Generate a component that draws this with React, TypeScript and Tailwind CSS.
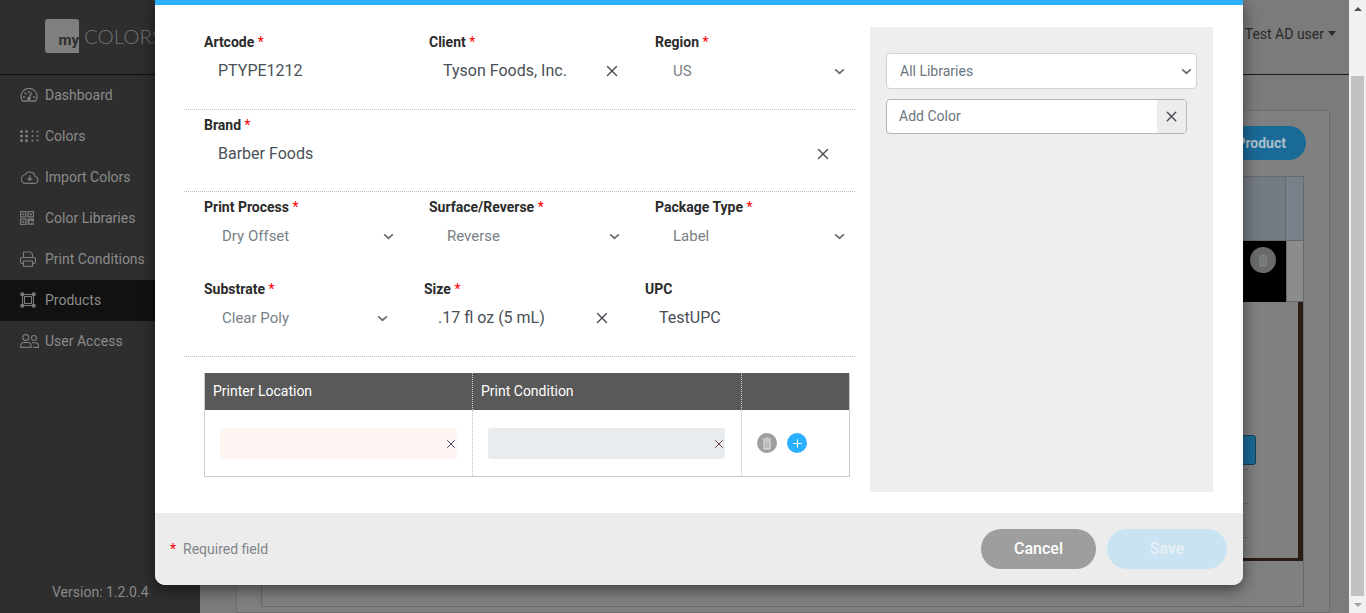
import React from "react";
import { X, Plus } from "lucide-react";

const Dots = () => (
  <svg viewBox="0 0 19 12" width="19" height="12" fill="currentColor">
    {[1.5, 6.5, 12.5, 17.5].map((x, i) =>
      [1.5, 6, 10.5].map((y) => <circle key={`${x}-${y}`} cx={x} cy={y} r={i < 2 ? 1.5 : 1.1} />)
    )}
  </svg>
);

const DashIcon = () => (
  <svg viewBox="0 0 18 14" width="18" height="14" fill="none" stroke="currentColor" strokeWidth="1.3">
    <path d="M2.5 13 H15.5 A8 8 0 1 0 2.5 13 Z" />
    <path d="M9 10.5 L11.5 4.5" strokeWidth="1.6" />
    <circle cx="9" cy="10.5" r="1.2" fill="currentColor" />
    <g fill="currentColor" stroke="none">
      <circle cx="4" cy="9" r="1.1" />
      <circle cx="5.5" cy="5.5" r="1.1" />
      <circle cx="9" cy="4" r="1.1" />
      <circle cx="14" cy="9" r="1.1" />
    </g>
  </svg>
);

const CloudIcon = () => (
  <svg viewBox="0 0 19 14" width="19" height="14" fill="none" stroke="currentColor" strokeWidth="1.1">
    <path d="M5 13.4 H14.5 A3.5 3.5 0 0 0 15.2 6.5 A5.6 5.6 0 0 0 4.9 4.8 A4.4 4.4 0 0 0 5 13.4 Z" />
    <path d="M9.8 5.2 V10.2 M7.6 8.2 L9.8 10.4 L12 8.2" strokeWidth="1.3" />
  </svg>
);

const QrIcon = () => (
  <svg viewBox="0 0 14 14" width="14" height="14" fill="none" stroke="currentColor" strokeWidth="1.2">
    <rect x="0.6" y="0.6" width="5.3" height="5.3" />
    <rect x="8.1" y="0.6" width="5.3" height="5.3" />
    <rect x="0.6" y="8.1" width="5.3" height="5.3" />
    <g fill="currentColor" stroke="none">
      <rect x="2.3" y="2.3" width="2" height="2" />
      <rect x="9.8" y="2.3" width="2" height="2" />
      <rect x="2.3" y="9.8" width="2" height="2" />
      <path d="M7.5 7.5 H14 V10.5 H11.5 V9.5 H9.5 V14 H7.5 Z" />
      <rect x="10.5" y="12" width="1.5" height="2" />
      <rect x="12.5" y="11.5" width="1.5" height="2.5" />
    </g>
  </svg>
);

const PrinterIcon = () => (
  <svg viewBox="0 0 16 16" width="16" height="16" fill="none" stroke="currentColor" strokeWidth="1.1">
    <path d="M3.5 6.5 V1 H10.5 L12.5 3 V6.5" />
    <rect x="0.6" y="6.5" width="14.8" height="6" rx="1.5" />
    <rect x="3.5" y="10" width="9" height="5.4" fill="#2e2e2e" />
  </svg>
);

const Frame = () => (
  <svg viewBox="0 0 16 16" width="16" height="16" fill="none" stroke="currentColor" strokeWidth="1.1">
    <rect x="2.5" y="2.5" width="11" height="11" />
    <rect x="4.5" y="4.5" width="7" height="7" />
    <rect x="1" y="1" width="2.4" height="2.4" fill="currentColor" />
    <rect x="12.6" y="1" width="2.4" height="2.4" fill="currentColor" />
    <rect x="1" y="12.6" width="2.4" height="2.4" fill="currentColor" />
    <rect x="12.6" y="12.6" width="2.4" height="2.4" fill="currentColor" />
  </svg>
);

const UsersIcon = () => (
  <svg viewBox="0 0 19 14" width="19" height="14" fill="none" stroke="currentColor" strokeWidth="1.1">
    <circle cx="5.8" cy="3.6" r="3" />
    <path d="M0.7 13.4 V11.5 A3 3 0 0 1 3.7 8.5 H8 A3 3 0 0 1 11 11.5 V13.4 Z" />
    <circle cx="14" cy="4" r="2.5" />
    <path d="M12 8.7 H15.5 A3 3 0 0 1 18.4 11.6 V13.4 H13" />
  </svg>
);

const TrashIcon = ({ body, stripe }: { body: string; stripe: string }) => (
  <svg viewBox="0 0 10 13" width="10" height="13">
    <rect x="0.5" y="1.5" width="9" height="1.2" fill={body} />
    <rect x="3.5" y="0.3" width="3" height="1.2" fill={body} />
    <rect x="1.2" y="3.2" width="7.6" height="9.3" rx="0.8" fill={body} />
    <path d="M3.2 4.5 V11 M5 4.5 V11 M6.8 4.5 V11" stroke={stripe} strokeWidth="0.8" />
  </svg>
);

const Chevron = () => (
  <svg viewBox="0 0 12 8" width="11" height="7" fill="none" stroke="#6f6f6f" strokeWidth="2">
    <path d="M1 1.5 L6 6 L11 1.5" />
  </svg>
);

const Req = () => <span className="text-[#ff0000] font-normal"> *</span>;

function Field({
  label,
  required = true,
  value,
  kind,
  width,
  select,
}: {
  label: string;
  required?: boolean;
  value: string;
  kind?: "x" | "select";
  width: string;
  select?: boolean;
}) {
  return (
    <div>
      <div className="h-5 text-sm leading-5 font-bold text-[#2b2b2b]">
        {label}
        {required && <Req />}
      </div>
      <div className={`h-[38px] flex items-center justify-between ${width} ${select ? "pl-[18px]" : "pl-[14px]"}`}>
        <span className={select ? "pt-[2px] text-[15px] text-[#787f86]" : "text-base text-[#495057]"}>{value}</span>
        {kind === "x" && <X size={18} strokeWidth={1.9} className="text-[#4a4f55]" />}
        {kind === "select" && <Chevron />}
      </div>
    </div>
  );
}

const navItems: { label: string; icon: React.ReactNode; active?: boolean }[] = [
  { label: "Dashboard", icon: <DashIcon /> },
  { label: "Colors", icon: <Dots /> },
  { label: "Import Colors", icon: <CloudIcon /> },
  { label: "Color Libraries", icon: <QrIcon /> },
  { label: "Print Conditions", icon: <PrinterIcon /> },
  { label: "Products", icon: <Frame />, active: true },
  { label: "User Access", icon: <UsersIcon /> },
];

function Sidebar() {
  return (
    <aside className="w-[200px] shrink-0 bg-[#2e2e2e] flex flex-col h-full">
      <div className="h-[75px] shrink-0 border-b border-[#111] flex items-center pl-[45px] pb-[2px]">
        <div className="w-[34px] h-[34px] bg-[#7f7f7f] rounded-l-[3px] rounded-tr-[3px] flex items-end justify-end pb-[4px]">
          <span className="text-[15px] leading-[17px] font-bold text-[#2e2e2e]">my</span>
        </div>
        <span className="ml-[5px] text-[20.5px] text-[#717171] font-light font-['Lato',sans-serif]">COLORS</span>
      </div>
      <nav className="flex flex-col">
        {navItems.map((n) => (
          <div key={n.label} className={`h-[41px] flex items-center text-sm text-[#8b8b8b] pb-[2px] ${n.active ? "bg-[#111111]" : ""}`}>
            <span className="w-[45px] pl-[20px] flex items-center text-[#7b7b7b]">{n.icon}</span>
            <span>{n.label}</span>
          </div>
        ))}
      </nav>
      <div className="mt-auto h-[31px] pl-[52px] text-sm text-[#8b8b8b]">Version: 1.2.0.4</div>
    </aside>
  );
}

function Backdrop() {
  return (
    <main className="flex-1 bg-[#7b7b7b] flex flex-col min-w-0">
      <header className="h-[75px] shrink-0 border-b border-[#1a1a1a] flex items-center justify-end pr-[13px] pb-[7px]">
        <span className="text-sm text-[#2a2a2a]">Test AD user</span>
        <span className="ml-[4px] border-x-[4px] border-t-[5px] border-x-transparent border-t-[#2a2a2a]" />
      </header>
      <div className="flex-1 pl-[36px] pr-[19px] pt-[35px] min-h-0">
        <div className="h-full border border-[#6b6f72] bg-[#808080] pl-[24px] pr-[25px] pt-[15px]">
          <div className="flex justify-end -mr-[2px]">
            <div className="w-[160px] h-[34px] rounded-full bg-[#1a6a96] text-[#a9bfcc] text-sm font-bold flex items-center justify-end pr-[20px]">
              Add Product
            </div>
          </div>
          <div className="mt-[16px] border border-[#66696c] h-[431px] flex flex-col">
            <div className="h-[64px] shrink-0 flex border-b border-[#66696c] bg-[#737a80]">
              <div className="flex-1" />
              <div className="w-[18px] border-l border-[#66696c] bg-[#78808a]" />
            </div>
            <div className="h-[61px] shrink-0 flex">
              <div className="flex-1 bg-black flex justify-end items-start pt-[6px] pr-[10px]">
                <div className="w-[26px] h-[26px] rounded-full bg-[#6a6a6a] flex items-center justify-center">
                  <TrashIcon body="#7f8488" stripe="#6a6a6a" />
                </div>
              </div>
              <div className="w-[17px] border-l border-b border-[#66696c] bg-[#8c8c8c]" />
            </div>
            <div className="h-[259px] shrink-0 border-r-[5px] border-b-[3px] border-[#2a1c12] flex flex-col items-end pt-[133px]">
              <div className="mr-[42px] w-[40px] h-[30px] shrink-0 rounded-[3px] bg-[#1a6a96] border border-[#153e57]" />
              <div className="mt-[4px] mr-[50px] w-[40px] h-[34px] shrink-0 border-t border-dotted border-[#5f5f5f]" />
              <div className="mr-[50px] w-[40px] h-[34px] shrink-0 border-t border-dotted border-[#5f5f5f]" />
              <div className="mr-[50px] w-[40px] h-[3px] shrink-0 border-t border-dotted border-[#5f5f5f]" />
            </div>
          </div>
        </div>
      </div>
    </main>
  );
}

function Scrollbar() {
  return (
    <div className="w-[17px] shrink-0 bg-[#f1f1f1] flex flex-col items-center">
      <div className="h-[17px] flex items-center justify-center">
        <span className="border-x-[4px] border-b-[4px] border-x-transparent border-b-[#505050]" />
      </div>
      <div className="mt-[59px] h-[520px] w-[13px] bg-[#c1c1c1]" />
      <div className="mt-auto h-[17px] flex items-center justify-center">
        <span className="border-x-[4px] border-t-[4px] border-x-transparent border-t-[#a3a3a3]" />
      </div>
    </div>
  );
}

function Modal() {
  return (
    <div className="absolute left-[155px] top-0 w-[1088px] h-[585px] bg-white border-t-[5px] border-[#2bb0ff] rounded-b-[10px] shadow-[0_5px_15px_rgba(0,0,0,0.5)] flex flex-col overflow-hidden">
      <div className="flex-1 flex min-h-0">
        <div className="w-[700px] pl-[29px] pr-0 pt-[27px]">
          <div className="w-[671px] text-sm">
            <div className="px-5 pb-[19px] border-b border-dotted border-[#bdbdbd] grid grid-cols-[225px_226px_1fr]">
              <Field label="Artcode" value="PTYPE1212" width="w-[190px]" />
              <Field label="Client" value="Tyson Foods, Inc." kind="x" width="w-[192px]" />
              <Field label="Region" value="US" kind="select" select width="w-[190px]" />
            </div>
            <div className="px-5 pt-[5px] pb-[18px] border-b border-dotted border-[#bdbdbd]">
              <Field label="Brand" value="Barber Foods" kind="x" width="w-[628px]" />
            </div>
            <div className="px-5 pt-[5px] grid grid-cols-[225px_226px_1fr]">
              <Field label="Print Process" value="Dry Offset" kind="select" select width="w-[190px]" />
              <Field label="Surface/Reverse" value="Reverse" kind="select" select width="w-[191px]" />
              <Field label="Package Type" value="Label" kind="select" select width="w-[190px]" />
            </div>
            <div className="px-5 pt-[24px] pb-[19px] border-b border-dotted border-[#bdbdbd] grid grid-cols-[220px_221px_1fr]">
              <Field label="Substrate" value="Clear Poly" kind="select" select width="w-[184px]" />
              <Field label="Size" value=".17 fl oz (5 mL)" kind="x" width="w-[187px]" />
              <Field label="UPC" required={false} value="TestUPC" width="w-[190px]" />
            </div>
            <div className="ml-5 mt-[16px] w-[646px] border border-t-0 border-[#cccccc] h-[104px] flex flex-col">
              <div className="h-[37px] shrink-0 bg-[#595959] text-white flex items-center">
                <div className="w-[268px] h-full pl-[8px] pb-[1px] flex items-center border-r border-dotted border-[#cfcfcf]">Printer Location</div>
                <div className="w-[269px] h-full pl-[8px] pb-[1px] flex items-center border-r border-dotted border-[#cfcfcf]">Print Condition</div>
              </div>
              <div className="flex-1 flex">
                <div className="w-[268px] pl-[15px] pt-[18px] border-r border-dotted border-[#bdbdbd]">
                  <div className="w-[237px] h-[31px] bg-[#fff5f3] rounded-[3px] flex items-center justify-end">
                    <X size={14} strokeWidth={1.6} className="-mr-[1px] text-[#33335f]" />
                  </div>
                </div>
                <div className="w-[269px] pl-[15px] pt-[18px] border-r border-dotted border-[#bdbdbd]">
                  <div className="w-[237px] h-[31px] bg-[#e9ecef] rounded-[3px] flex items-center justify-end">
                    <X size={14} strokeWidth={1.6} className="-mr-[1px] text-[#5f3333]" />
                  </div>
                </div>
                <div className="flex items-start gap-[10px] pl-[15px] pt-[23px]">
                  <div className="w-5 h-5 rounded-full bg-[#9e9e9e] flex items-center justify-center">
                    <TrashIcon body="#d4d4d4" stripe="#a0a0a0" />
                  </div>
                  <div className="w-5 h-5 rounded-full bg-[#2bb0ff] flex items-center justify-center">
                    <Plus size={13} strokeWidth={2} className="text-white" />
                  </div>
                </div>
              </div>
            </div>
          </div>
        </div>
        <div className="ml-[15px] mt-[22px] w-[343px] h-[465px] bg-[#eeeeee] px-[16px] pt-[26px]">
          <div className="w-[311px] h-[36px] bg-white border border-[#ced4da] rounded-[4px] flex items-center justify-between pl-[13px] pr-[4px] text-sm text-[#6c757d]">
            All Libraries
            <Chevron />
          </div>
          <div className="mt-[10px] w-[301px] h-[35px] bg-white border border-[#b5b5b5] rounded-[4px] flex overflow-hidden">
            <div className="flex-1 pl-[12px] pb-[2px] flex items-center text-sm text-[#6c757d]">Add Color</div>
            <div className="w-[29px] bg-[#ececec] flex items-center justify-center">
              <X size={17} strokeWidth={2} className="text-[#4a4f55]" />
            </div>
          </div>
        </div>
      </div>
      <footer className="h-[72px] shrink-0 bg-[#ececec] flex items-center pl-[15px] pr-[16px]">
        <span className="text-sm text-[#7f858a]">
          <span className="text-[#ff0000] mr-[7px]">*</span>Required field
        </span>
        <div className="ml-auto w-[115px] h-[40px] rounded-full bg-[#9e9e9e] text-white font-medium text-base flex items-center justify-center">Cancel</div>
        <div className="ml-[11px] w-[120px] h-[40px] rounded-full bg-[#c9e3f2] text-[#e4eef4] font-bold text-base flex items-center justify-center">Save</div>
      </footer>
    </div>
  );
}

export default function App() {
  return (
    <div className="relative w-[1366px] h-[613px] overflow-hidden flex font-['Roboto',sans-serif]">
      <Sidebar />
      <Backdrop />
      <Scrollbar />
      <Modal />
    </div>
  );
}
